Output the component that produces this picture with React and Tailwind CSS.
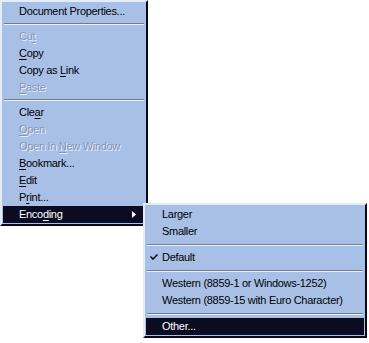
import React from 'react';

const U = ({ children }) => <span className="underline underline-offset-2">{children}</span>;

const Item = ({ children, disabled, active, arrow, check }) => (
  <div
    className={`relative flex items-center h-[17px] pl-[16px] pr-2 whitespace-nowrap ${
      active ? 'bg-[#0b0b22] text-white' : disabled ? 'text-[#8497ba] [text-shadow:1px_1px_0_#e8eef8]' : 'text-black'
    }`}
  >
    {check && (
      <svg className="absolute left-[4px] top-[5px]" width="8" height="7" viewBox="0 0 8 7">
        <path d="M0 3 L1 2 L3 4 L7 0 L8 1 L3 6 Z" fill="#000" />
      </svg>
    )}
    <span className="flex-1">{children}</span>
    {arrow && (
      <svg width="4" height="7" viewBox="0 0 4 7" className="mr-[1px]">
        <path d="M0 0 L4 3.5 L0 7 Z" fill="#fff" />
      </svg>
    )}
  </div>
);

const Sep = ({ h = 'h-[8px]' }) => (
  <div className={`${h} flex flex-col justify-center px-[1px]`}>
    <div className="h-px bg-[#6c7c98]" />
    <div className="h-px bg-[#eef3fb]" />
  </div>
);

const Menu = ({ className, children }) => (
  <div
    className={`border-t-2 border-l-2 border-t-[#e4ecf8] border-l-[#e4ecf8] border-r-2 border-b-2 border-r-[#0a0a14] border-b-[#0a0a14] bg-[#a9c0e6] p-[1px] ${className}`}
  >
    {children}
  </div>
);

export default function App() {
  return (
    <div className="relative w-[369px] h-[343px] bg-white text-[11px] leading-none tracking-[-0.3px]" style={{ fontFamily: '"Liberation Sans", Arial, sans-serif' }}>
      <Menu className="w-[148px] pt-[1px]">
        <Item>Document Properties...</Item>
        <Sep />
        <Item disabled>Cu<U>t</U></Item>
        <Item><U>C</U>opy</Item>
        <Item>Copy as <U>L</U>ink</Item>
        <Item disabled><U>P</U>aste</Item>
        <Sep />
        <Item>Cle<U>a</U>r</Item>
        <Item disabled><U>O</U>pen</Item>
        <Item disabled>Open In <U>N</U>ew Window</Item>
        <Item><U>B</U>ookmark...</Item>
        <Item><U>E</U>dit</Item>
        <Item>P<U>r</U>int...</Item>
        <Item active arrow>Enco<U>d</U>ing</Item>
      </Menu>

      <Menu className="absolute left-[143px] top-[203px] w-[224px]">
        <Item>Larger</Item>
        <Item>Smaller</Item>
        <Sep h="h-[9px]" />
        <Item check>Default</Item>
        <Sep h="h-[9px]" />
        <Item>Western (8859-1 or Windows-1252)</Item>
        <Item>Western (8859-15 with Euro Character)</Item>
        <Sep h="h-[9px]" />
        <Item active>Other...</Item>
      </Menu>
    </div>
  );
}
